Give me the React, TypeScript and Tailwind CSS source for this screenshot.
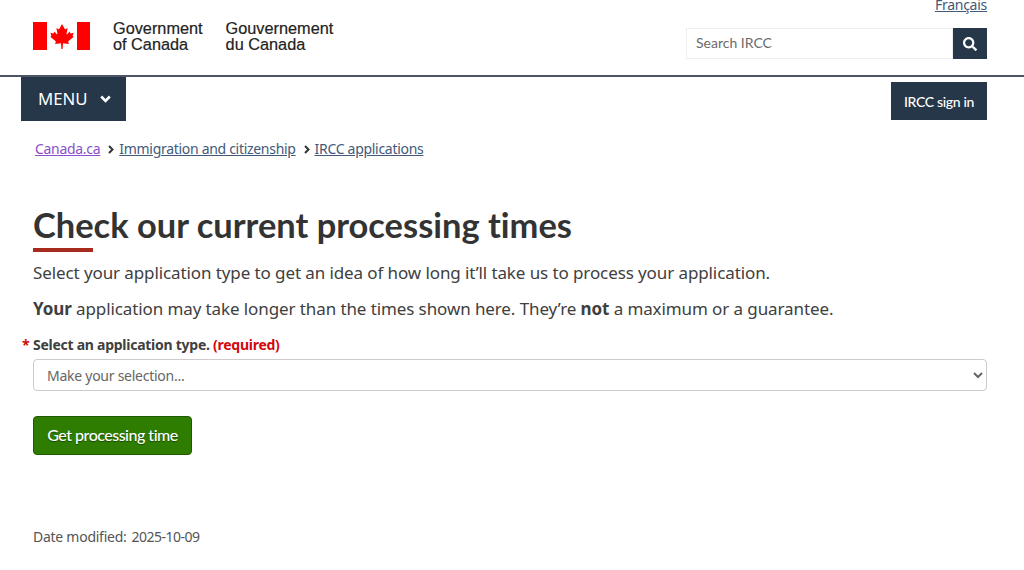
import React from "react";
import { FaSearch } from "react-icons/fa";

function Flag() {
  return (
    <svg width="57" height="28" viewBox="0 0 57 28" aria-label="Canada flag">
      <rect x="0" y="0" width="14" height="28" fill="#ff0000" />
      <rect x="44" y="0" width="13" height="28" fill="#ff0000" />
      <path
        d="M29 2 L31.6 6.8 Q32 7.4 32.8 7 L34.6 6 L33.6 11.6 Q33.5 12.6 34.4 12 L36.8 9.6 L37.4 11.4 L40.6 10.8 L39.6 14 L40.8 14.8 L35.6 19 Q35 19.6 35.4 20.4 L36 22 L30 21.2 L29.6 27 L28.4 27 L28 21.2 L22 22 L22.6 20.4 Q23 19.6 22.4 19 L17.2 14.8 L18.4 14 L17.4 10.8 L20.6 11.4 L21.2 9.6 L23.6 12 Q24.5 12.6 24.4 11.6 L23.4 6 L25.2 7 Q26 7.4 26.4 6.8 Z"
        fill="#ff0000"
      />
    </svg>
  );
}

function ChevronDown() {
  return (
    <svg width="11" height="8" viewBox="0 0 11 8" fill="none" stroke="currentColor" strokeWidth="2.6">
      <path d="M1.2 1.5 L5.5 5.8 L9.8 1.5" />
    </svg>
  );
}

function ChevronRight() {
  return (
    <svg width="6" height="9" viewBox="0 0 6 9" fill="none" stroke="#333" strokeWidth="2" className="ml-[8px] mr-[5px]">
      <path d="M1 1 L4.5 4.5 L1 8" />
    </svg>
  );
}

export default function App() {
  const crumbs = ["Immigration and citizenship", "IRCC applications"];

  return (
    <div className="h-[570px] overflow-hidden bg-white font-['Noto_Sans',sans-serif] text-[#404040]">
      <header className="h-[77px] border-b-2 border-[#4b5563] pl-[33px] pr-[37px] flex justify-between">
        <div className="flex items-start pt-[22px]">
          <Flag />
          <div className="ml-[23px] font-['Liberation_Sans',sans-serif] text-[16.3px] leading-[16px] text-[#222] [-webkit-text-stroke:0.2px_#222] flex gap-[23px] -mt-[2px]">
            <span>Government<br />of Canada</span>
            <span>Gouvernement<br />du Canada</span>
          </div>
        </div>
        <div className="flex flex-col items-end">
          <a href="#" className="text-[14px] tracking-[-0.26px] leading-[19px] -mt-[5px] text-[#42597a] underline">Français</a>
          <div className="flex mt-[14px]">
            <input
              placeholder="Search IRCC"
              className="w-[267px] h-[31px] pb-[2px] border border-[#eeeeee] px-[9px] text-[14px] placeholder:text-[#6b6b6b] font-['Lato',sans-serif]"
            />
            <button className="w-[34px] h-[31px] bg-[#26374a] text-white flex items-center justify-center">
              <FaSearch size={14} />
            </button>
          </div>
        </div>
      </header>

      <div className="pl-[21px] pr-[37px] flex justify-between items-start">
        <button className="w-[105px] h-[44px] pl-[17px] bg-[#26374a] text-white text-[16.8px] flex items-center gap-[12px]">
          MENU
          <ChevronDown />
        </button>
        <button className="w-[96px] h-[38px] mt-[5px] bg-[#26374a] text-white text-[14px] tracking-[-0.33px] font-['Lato',sans-serif] font-medium">
          IRCC sign in
        </button>
      </div>

      <nav className="pl-[35px] mt-[18px] flex items-center text-[14px] tracking-[-0.3px] leading-[20px]">
        <a href="#" className="text-[#8a4fc9] underline">Canada.ca</a>
        {crumbs.map((c) => (
          <span key={c} className="flex items-center">
            <ChevronRight />
            <a href="#" className="text-[#42597a] underline">{c}</a>
          </span>
        ))}
      </nav>

      <main className="pl-[33px] pr-[37px]">
        <h1 className="mt-[46px] font-['Lato',sans-serif] font-bold text-[34.45px] leading-[40px] text-[#333] [font-variant-ligatures:none]">
          Check our current processing times
        </h1>
        <div className="mt-[3px] w-[60px] h-[4px] bg-[#a62a1e]" />
        <p className="mt-[8px] text-[17px] tracking-[-0.1px] leading-[26px]">
          Select your application type to get an idea of how long it’ll take us to process your application.
        </p>
        <p className="mt-[10px] text-[17px] tracking-[-0.1px] leading-[26px]">
          <strong>Your</strong> application may take longer than the times shown here. They’re <strong>not</strong> a maximum or a guarantee.
        </p>

        <label className="relative block mt-[13px] text-[14px] tracking-[-0.26px] leading-[20px] font-bold">
          <span className="absolute -left-[11px] text-[#d3080c]">*</span>
          Select an application type. <span className="text-[#d3080c]">(required)</span>
        </label>
        <select className="mt-[4px] w-full h-[32px] pl-[9px] bg-white border border-[#cccccc] rounded-[4px] text-[14px] tracking-[-0.26px] text-[#666]">
          <option>Make your selection...</option>
        </select>

        <button className="mt-[25px] block w-[159px] h-[39px] pb-[1px] bg-[#2e7d00] border border-[#1f5a00] rounded-[4px] text-white text-[16px] tracking-[-0.5px] font-['Lato',sans-serif] font-medium [text-shadow:0_1px_1px_#1a4a00]">
          Get processing time
        </button>

        <p className="mt-[72px] text-[14px] tracking-[-0.26px] leading-[20px] text-[#555]">
          Date modified:<span className="ml-[5px] tracking-[-0.5px]">2025-10-09</span>
        </p>
      </main>
    </div>
  );
}
